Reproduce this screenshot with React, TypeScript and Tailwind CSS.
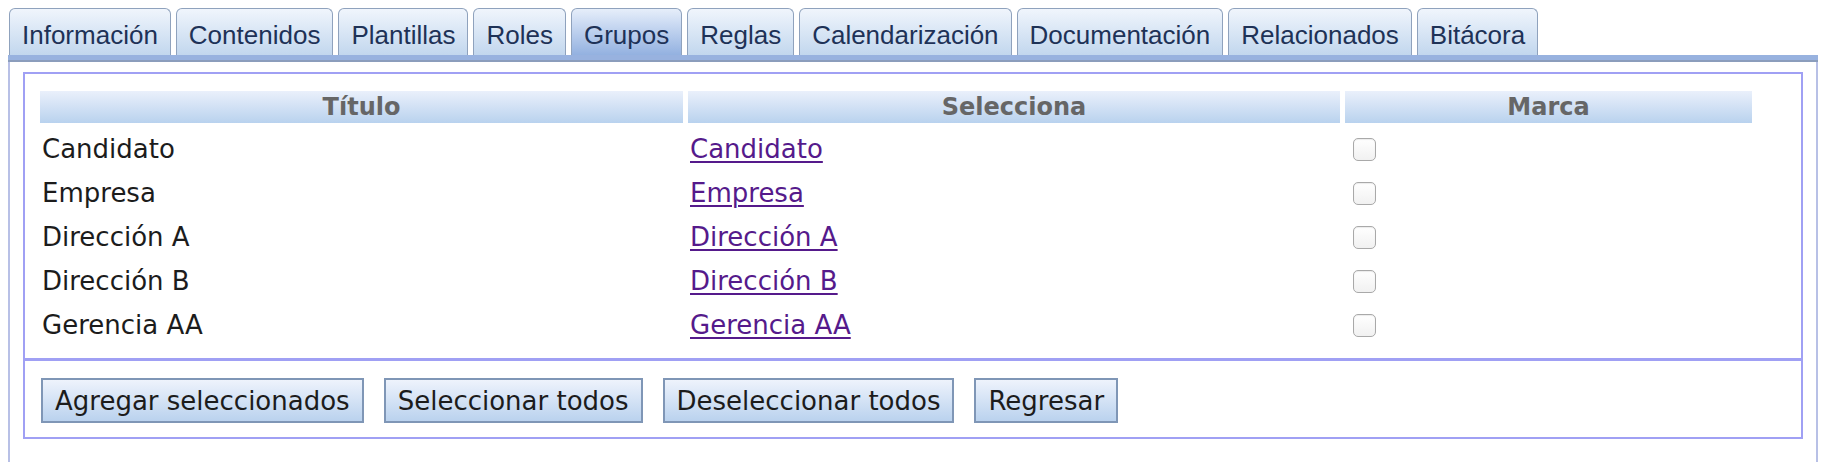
const tabs = [
  "Información",
  "Contenidos",
  "Plantillas",
  "Roles",
  "Grupos",
  "Reglas",
  "Calendarización",
  "Documentación",
  "Relacionados",
  "Bitácora",
];

const grupos = ["Candidato", "Empresa", "Dirección A", "Dirección B", "Gerencia AA"];

const botones = ["Agregar seleccionados", "Seleccionar todos", "Deseleccionar todos", "Regresar"];

const sans = "font-['Liberation_Sans',Arial,sans-serif]";
const lucida = "font-['DejaVu_Sans','Lucida_Grande',sans-serif]";

export default function App() {
  return (
    <div className="w-[1824px] h-[464px] overflow-hidden bg-white pl-[8px] pr-[6px] pt-[8px]">
      {/* Tabs */}
      <div className={`flex items-end gap-[5px] pl-[1px] ${sans}`}>
        {tabs.map((t) => {
          const active = t === "Grupos";
          return (
            <div
              key={t}
              className={
                active
                  ? "h-[47px] rounded-t-[6px] border border-b-0 border-[#8fa2bd] bg-gradient-to-b from-[#e6eefa] to-[#93b1e0] px-[12px] pt-[11px] text-[26px] leading-[30px] text-[#1e3257]"
                  : "h-[47px] rounded-t-[6px] border border-b-0 border-[#8fa2bd] bg-gradient-to-b from-[#f0f5fc] to-[#c2d7ee] px-[12px] pt-[11px] text-[26px] leading-[30px] text-[#1e3257]"
              }
            >
              {t}
            </div>
          );
        })}
      </div>
      <div className="h-[7px] bg-[#98b2df] border-b-[2px] border-[#8b9dbc]" />

      {/* Panel */}
      <div className="h-[400px] border-x-2 border-[#b8c0e6] px-[13px] pt-[10px]">
        <div className="border-2 border-[#a0a0f4]">
          <div className={`px-[15px] pt-[17px] pb-[11px] ${lucida}`}>
            <div className="grid grid-cols-[643px_652px_407px] gap-x-[5px]">
              {["Título", "Selecciona", "Marca"].map((h) => (
                <div
                  key={h}
                  className="h-[32px] flex items-center justify-center bg-gradient-to-b from-[#eaf0fb] to-[#b9d2ee] text-[24px] font-bold text-[#666]"
                >
                  {h}
                </div>
              ))}
            </div>
            <div className="mt-[4px] grid grid-cols-[643px_652px_407px] gap-x-[5px]">
              {grupos.map((g) => (
                <div key={g} className="contents">
                  <div className="h-[44px] flex items-center pl-[2px] text-[26px] text-[#1c1c1c]">{g}</div>
                  <div className="h-[44px] flex items-center pl-[2px] text-[26px]">
                    <a href="#" className="text-[#551a8b] underline underline-offset-[3px] decoration-[2px]">
                      {g}
                    </a>
                  </div>
                  <div className="h-[44px] flex items-center pl-[8px]">
                    <span className="w-[23px] h-[23px] rounded-[5px] border border-[#a9a9a9] bg-gradient-to-b from-white to-[#f1f1f1] shadow-[inset_0_1px_1px_rgba(0,0,0,0.08)]" />
                  </div>
                </div>
              ))}
            </div>
          </div>
          <div className="border-t-[3px] border-[#a0a0f4]" />
          <div className={`flex gap-[20px] px-[16px] pt-[17px] pb-[14px] ${lucida}`}>
            {botones.map((b) => (
              <button
                key={b}
                className="h-[45px] border-2 border-[#7f96b6] bg-gradient-to-b from-[#eef3fc] to-[#bad2ee] px-[12px] text-[26px] leading-none text-[#1c1c1c]"
              >
                {b}
              </button>
            ))}
          </div>
        </div>
      </div>
    </div>
  );
}
